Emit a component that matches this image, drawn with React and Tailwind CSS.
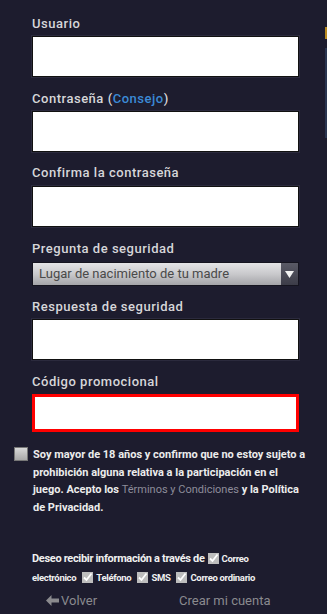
import React from 'react';

const Label = ({ children, className = '' }) => (
  <div className={`text-[13px] font-medium tracking-[0.04em] text-[#d6d6d9] leading-none ${className}`}>{children}</div>
);

const Field = ({ red }) => (
  <div
    className={
      red
        ? 'h-[38px] bg-white border-[3px] border-[#ff0000]'
        : 'h-[41px] bg-white border border-[#111] shadow-[0_0_0_1px_#2b2a3d]'
    }
  />
);

const Tick = () => (
  <svg width="11" height="11" viewBox="0 0 11 11" className="shrink-0 mx-[3px]">
    <rect x="0" y="0" width="11" height="11" fill="#bdbdbd" />
    <path d="M2 5.5 L4.5 8 L9.5 1.5" stroke="#ffffff" strokeWidth="1.8" fill="none" />
  </svg>
);

const Small = ({ children }) => <span className="text-[9.5px] leading-[19px] mr-[3px]">{children}</span>;

export default function App() {
  return (
    <div
      className="relative w-[327px] h-[614px] overflow-hidden bg-[#1d1c2e] text-white"
      style={{ fontFamily: 'Roboto, "Noto Sans", sans-serif' }}
    >
      {/* edge of the panel behind */}
      <div className="absolute right-0 top-[27px] w-[2px] h-[12px] bg-[#b8891e]" />
      <div className="absolute right-0 top-[48px] w-[2px] h-[90px] bg-[#2a3550]" />

      <div className="pl-[32px] pr-[28px] pt-[17px]">
        <Label>Usuario</Label>
        <div className="mt-[6px]"><Field /></div>

        <Label className="mt-[15px]">
          Contraseña (<span className="text-[#3b8ad6]">Consejo</span>)
        </Label>
        <div className="mt-[6px]"><Field /></div>

        <Label className="mt-[14px]">Confirma la contraseña</Label>
        <div className="mt-[7px]"><Field /></div>

        <Label className="mt-[15px]">Pregunta de seguridad</Label>
        <div className="mt-[7px] h-[24px] flex border border-[#15141f]">
          <div className="flex-1 flex items-center pl-[6px] text-[13px] text-[#4a4a4a] bg-gradient-to-b from-[#e4e4e6] via-[#c9c9cc] to-[#a4a4a8]">
            Lugar de nacimiento de tu madre
          </div>
          <div className="w-[17px] flex items-center justify-center bg-gradient-to-b from-[#5a5a66] to-[#3c3c48]">
            <svg width="9" height="7" viewBox="0 0 9 7"><path d="M0 0 H9 L4.5 7 Z" fill="#f2f2f2" /></svg>
          </div>
        </div>

        <Label className="mt-[14px]">Respuesta de seguridad</Label>
        <div className="mt-[6px]"><Field /></div>

        <Label className="mt-[15px]">Código promocional</Label>
        <div className="mt-[6px]"><Field red /></div>
      </div>

      <div className="flex mt-[14px] pl-[14px] pr-[10px]">
        <div className="w-[14px] h-[14px] mt-[1px] shrink-0 bg-gradient-to-b from-[#d8d8d8] to-[#a9a9a9] border border-[#777]" />
        <p className="ml-[5px] text-[11px] font-bold leading-[17.5px] text-[#ececec] whitespace-nowrap">
          Soy mayor de 18 años y confirmo que no estoy sujeto a<br />
          prohibición alguna relativa a la participación en el<br />
          juego. Acepto los <span className="font-normal text-[#8d8c9a]">Términos y Condiciones</span> y la Política<br />
          de Privacidad.
        </p>
      </div>

      <div className="pl-[32px] pr-[60px] mt-[33px] font-bold text-[#f0f0f0] tracking-[-0.02em] flex flex-wrap items-center">
        <span className="text-[11px] leading-[19px]">Deseo recibir información a través de</span>
        <Tick />
        <Small>Correo</Small>
        <Small>electrónico</Small>
        <Tick />
        <Small>Teléfono</Small>
        <Tick />
        <Small>SMS</Small>
        <Tick />
        <Small>Correo ordinario</Small>
      </div>

      <div className="flex items-center mt-[4px] text-[13px] text-[#8a8a8e]">
        <div className="flex items-center pl-[46px] w-[179px]">
          <svg width="13" height="11" viewBox="0 0 13 11" className="mr-[2px]">
            <path d="M0 5.5 L5.5 0 V3.5 H13 V7.5 H5.5 V11 Z" fill="#8a8a8e" />
          </svg>
          Volver
        </div>
        <div>Crear mi cuenta</div>
      </div>
    </div>
  );
}
